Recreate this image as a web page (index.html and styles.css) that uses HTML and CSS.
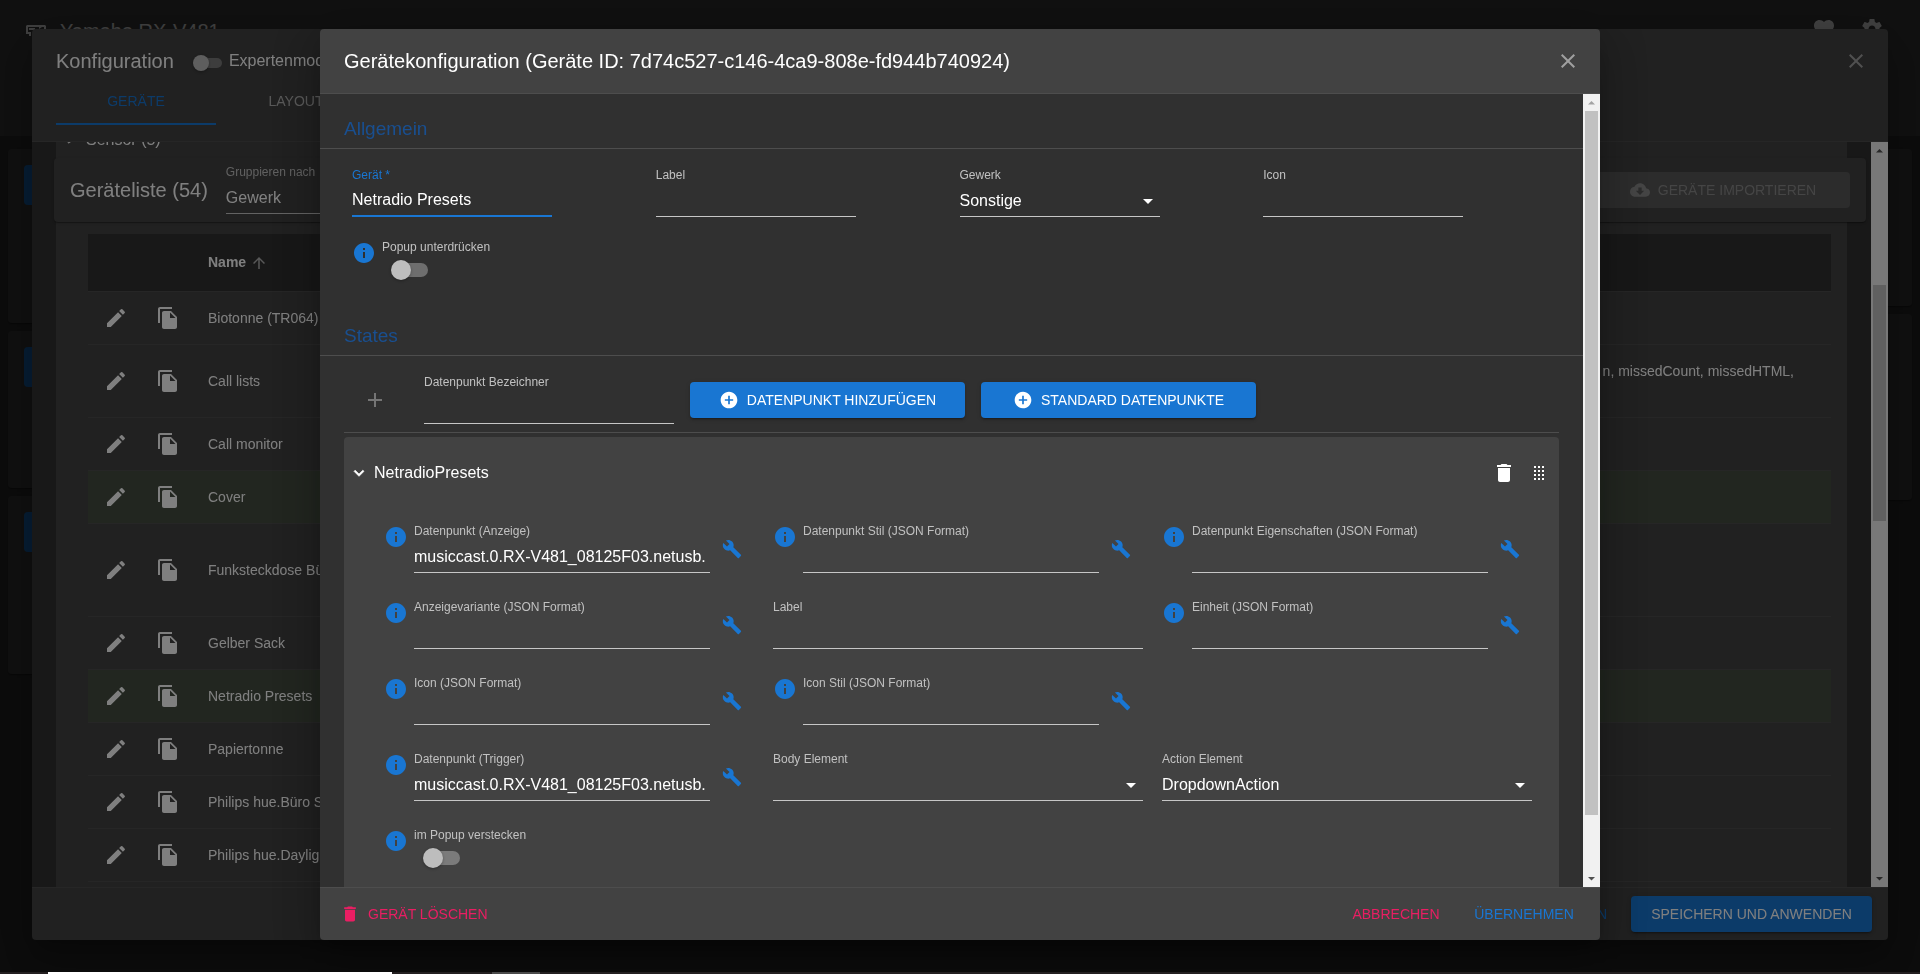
FILE: index.html
```html
<!DOCTYPE html>
<html lang="de">
<head>
<meta charset="utf-8">
<title>Gerätekonfiguration</title>
<link rel="stylesheet" href="styles.css">
</head>
<body>
<svg class="sprite" aria-hidden="true">
  <symbol id="close" viewBox="0 0 24 24"><path d="M19 6.41L17.59 5 12 10.59 6.41 5 5 6.41 10.59 12 5 17.59 6.41 19 12 13.41 17.59 19 19 17.59 13.41 12z"/></symbol>
  <symbol id="edit" viewBox="0 0 24 24"><path d="M3 17.25V21h3.75L17.81 9.94l-3.75-3.75L3 17.25zM20.71 7.04c.39-.39.39-1.02 0-1.41l-2.34-2.34a.9959.9959 0 00-1.41 0l-1.83 1.83 3.75 3.75 1.83-1.83z"/></symbol>
  <symbol id="copy" viewBox="0 0 24 24"><path d="M16 1H4c-1.1 0-2 .9-2 2v14h2V3h12V1zm-1 4l6 6v10c0 1.1-.9 2-2 2H7.99C6.89 23 6 22.1 6 21l.01-14c0-1.1.89-2 1.99-2h7zm-1 7h5.500L14 6.500V12z"/></symbol>
  <symbol id="info" viewBox="0 0 24 24"><path d="M12 2C6.480 2 2 6.480 2 12s4.480 10 10 10 10-4.480 10-10S17.520 2 12 2zm1 15h-2v-6h2v6zm0-8h-2V7h2v2z"/></symbol>
  <symbol id="wrench" viewBox="0 0 24 24"><path d="M22.7 19l-9.1-9.1c.9-2.3.4-5-1.500-6.900-2-2-5-2.400-7.400-1.300L9 6 6 9 1.600 4.700C.4 7.100.9 10.100 2.900 12.100c1.900 1.900 4.600 2.400 6.900 1.500l9.100 9.100c.4.4 1 .4 1.400 0l2.300-2.300c.5-.4.5-1.100.1-1.400z"/></symbol>
  <symbol id="trash" viewBox="0 0 24 24"><path d="M6 19c0 1.100.9 2 2 2h8c1.100 0 2-.9 2-2V7H6v12zM19 4h-3.500l-1-1h-5l-1 1H5v2h14V4z"/></symbol>
  <symbol id="plus" viewBox="0 0 24 24"><path d="M19 13h-6v6h-2v-6H5v-2h6V5h2v6h6v2z"/></symbol>
  <symbol id="addcircle" viewBox="0 0 24 24"><path d="M12 2C6.480 2 2 6.480 2 12s4.480 10 10 10 10-4.480 10-10S17.520 2 12 2zm5 11h-4v4h-2v-4H7v-2h4V7h2v4h4v2z"/></symbol>
  <symbol id="chevron" viewBox="0 0 24 24"><path d="M16.590 8.590L12 13.170 7.410 8.590 6 10l6 6 6-6z" stroke="currentColor" stroke-width=".8"/></symbol>
  <symbol id="caret" viewBox="0 0 24 24"><path d="M7 10l5 5 5-5z"/></symbol>
  <symbol id="arrowup" viewBox="0 0 24 24"><path d="M4 12l1.410 1.410L11 7.830V20h2V7.830l5.580 5.590L20 12l-8-8-8 8z"/></symbol>
  <symbol id="cloud" viewBox="0 0 24 24"><path d="M19.350 10.040C18.670 6.590 15.640 4 12 4 9.110 4 6.600 5.640 5.350 8.040 2.340 8.360 0 10.910 0 14c0 3.310 2.690 6 6 6h13c2.760 0 5-2.240 5-5 0-2.640-2.050-4.780-4.650-4.960zM17 13l-5 5-5-5h3V9h4v4h3z"/></symbol>
  <symbol id="heart" viewBox="0 0 24 24"><path d="M12 21.350l-1.450-1.320C5.400 15.360 2 12.280 2 8.500 2 5.420 4.420 3 7.500 3c1.740 0 3.410.81 4.500 2.090C13.090 3.810 14.760 3 16.500 3 19.580 3 22 5.420 22 8.500c0 3.780-3.400 6.860-8.550 11.540L12 21.350z"/></symbol>
  <symbol id="gear" viewBox="0 0 24 24"><path d="M19.430 12.980c.04-.32.07-.64.07-.98s-.03-.66-.07-.98l2.110-1.650c.19-.15.24-.42.12-.64l-2-3.460c-.12-.22-.39-.3-.61-.22l-2.490 1c-.52-.4-1.080-.73-1.690-.98l-.38-2.650C14.460 2.180 14.250 2 14 2h-4c-.25 0-.46.18-.49.42l-.38 2.650c-.61.25-1.170.59-1.690.98l-2.490-1c-.23-.09-.49 0-.61.22l-2 3.460c-.13.22-.07.49.12.64l2.110 1.650c-.04.32-.07.65-.07.98s.03.66.07.98l-2.110 1.650c-.19.15-.24.42-.12.64l2 3.460c.12.22.39.3.61.22l2.490-1c.52.4 1.080.73 1.690.98l.38 2.650c.03.24.24.42.49.42h4c.25 0 .46-.18.49-.42l.38-2.650c.61-.25 1.170-.59 1.690-.98l2.490 1c.23.09.49 0 .61-.22l2-3.460c.12-.22.07-.49-.12-.64l-2.110-1.650zM12 15.500c-1.930 0-3.500-1.570-3.500-3.500s1.570-3.500 3.500-3.500 3.500 1.570 3.500 3.500-1.570 3.500-3.500 3.500z"/></symbol>
  <symbol id="receiver" viewBox="0 0 24 24"><path d="M3 5h18l1 1v3h-2V7h-2l-3 2V7H4v5h3v4H5v-2H2V6zM5 8h6v2H5z"/></symbol>
  <symbol id="dots" viewBox="0 0 12 14"><path d="M0 0h2v2H0zM4 0h2v2H4zM8 0h2v2H8zM0 4h2v2H0zM4 4h2v2H4zM8 4h2v2H8zM0 8h2v2H0zM4 8h2v2H4zM8 8h2v2H8zM0 12h2v2H0zM4 12h2v2H4zM8 12h2v2H8z"/></symbol>
  <symbol id="scrollup" viewBox="0 0 17 17"><path d="M5 10.500h7L8.500 7z"/></symbol>
  <symbol id="scrolldown" viewBox="0 0 17 17"><path d="M5 7h7l-3.500 3.500z"/></symbol>
</svg>

<main class="app">
  <header class="app-bar">
    <svg class="icon"><use href="#receiver"/></svg>
    <h1 class="app-title">Yamaha RX-V481</h1>
    <button class="icon-btn" aria-label="Favoriten"><svg class="icon"><use href="#heart"/></svg></button>
    <button class="icon-btn" aria-label="Einstellungen"><svg class="icon"><use href="#gear"/></svg></button>
  </header>
  <div class="tiles">
    <div class="tile-col">
      <section class="tile tile-l"><span class="tile-badge"></span></section>
      <section class="tile tile-m"><span class="tile-badge"></span></section>
      <section class="tile tile-xl"><span class="tile-badge"></span></section>
    </div>
    <div class="tile-col">
      <section class="tile tile-m"></section>
      <section class="tile tile-xxl"></section>
    </div>
  </div>
</main>

<div class="overlay overlay-wide">
  <section class="dialog" role="dialog" aria-label="Konfiguration">
    <header class="dialog-head head-tabs">
      <div class="title-row">
        <h2 class="title">Konfiguration</h2>
        <label class="expert"><input type="checkbox" class="switch switch-small" role="switch">Expertenmodus</label>
        <button class="icon-btn close" aria-label="Schließen"><svg class="icon"><use href="#close"/></svg></button>
      </div>
      <nav class="tabs">
        <button class="tab tab-active">GERÄTE</button>
        <button class="tab">LAYOUT</button>
      </nav>
    </header>
    <div class="dialog-body">
      <div class="scroll-area list-area">
        <div class="list-panel">
          <div class="group-row"><svg class="icon icon-20"><use href="#chevron"/></svg>Sensor (5)</div>
          <div class="list-bar">
            <h3 class="title">Geräteliste (54)</h3>
            <div class="field field-group">
              <label for="group">Gruppieren nach</label>
              <select id="group"><option>Gewerk</option></select>
              <svg class="icon caret"><use href="#caret"/></svg>
            </div>
            <button class="btn btn-disabled" disabled><svg class="icon icon-20"><use href="#cloud"/></svg>GERÄTE IMPORTIEREN</button>
          </div>
          <table class="devices">
            <colgroup><col class="col-icon"><col class="col-icon"><col class="col-name"><col></colgroup>
            <thead><tr><th></th><th></th><th>Name <svg class="icon sort"><use href="#arrowup"/></svg></th><th></th></tr></thead>
            <tbody>
              <tr><td><svg class="icon"><use href="#edit"/></svg></td><td><svg class="icon"><use href="#copy"/></svg></td><td>Biotonne (TR064)</td><td></td></tr>
              <tr class="lines-2"><td><svg class="icon"><use href="#edit"/></svg></td><td><svg class="icon"><use href="#copy"/></svg></td><td>Call lists</td><td class="states">n, missedCount, missedHTML,</td></tr>
              <tr><td><svg class="icon"><use href="#edit"/></svg></td><td><svg class="icon"><use href="#copy"/></svg></td><td>Call monitor</td><td></td></tr>
              <tr class="marked"><td><svg class="icon"><use href="#edit"/></svg></td><td><svg class="icon"><use href="#copy"/></svg></td><td>Cover</td><td></td></tr>
              <tr class="lines-3"><td><svg class="icon"><use href="#edit"/></svg></td><td><svg class="icon"><use href="#copy"/></svg></td><td>Funksteckdose Büro</td><td></td></tr>
              <tr><td><svg class="icon"><use href="#edit"/></svg></td><td><svg class="icon"><use href="#copy"/></svg></td><td>Gelber Sack</td><td></td></tr>
              <tr class="marked"><td><svg class="icon"><use href="#edit"/></svg></td><td><svg class="icon"><use href="#copy"/></svg></td><td>Netradio Presets</td><td></td></tr>
              <tr><td><svg class="icon"><use href="#edit"/></svg></td><td><svg class="icon"><use href="#copy"/></svg></td><td>Papiertonne</td><td></td></tr>
              <tr><td><svg class="icon"><use href="#edit"/></svg></td><td><svg class="icon"><use href="#copy"/></svg></td><td>Philips hue.Büro S</td><td></td></tr>
              <tr><td><svg class="icon"><use href="#edit"/></svg></td><td><svg class="icon"><use href="#copy"/></svg></td><td>Philips hue.Daylight</td><td></td></tr>
            </tbody>
          </table>
        </div>
      </div>
      <div class="scrollbar">
        <svg class="arrow"><use href="#scrollup"/></svg>
        <div class="track track-list"><div class="thumb"></div></div>
        <svg class="arrow"><use href="#scrolldown"/></svg>
      </div>
    </div>
    <footer class="dialog-foot">
      <span class="spacer"></span>
      <button class="btn btn-text btn-primary">SPEICHERN</button>
      <button class="btn btn-fill btn-save">SPEICHERN UND ANWENDEN</button>
    </footer>
  </section>
</div>

<div class="overlay overlay-narrow">
  <section class="dialog dialog-device" role="dialog" aria-label="Gerätekonfiguration">
    <header class="dialog-head">
      <div class="title-row">
        <h2 class="title">Gerätekonfiguration (Geräte ID: 7d74c527-c146-4ca9-808e-fd944b740924)</h2>
        <button class="icon-btn close" aria-label="Schließen"><svg class="icon"><use href="#close"/></svg></button>
      </div>
    </header>
    <div class="dialog-body">
      <div class="scroll-area">
        <h3 class="section">Allgemein</h3>
        <div class="general">
          <div class="field focused"><label for="device">Gerät *</label><input id="device" type="text" value="Netradio Presets"></div>
          <div class="field"><label for="glabel">Label</label><input id="glabel" type="text"></div>
          <div class="field"><label for="trade">Gewerk</label><select id="trade"><option>Sonstige</option></select><svg class="icon caret"><use href="#caret"/></svg></div>
          <div class="field"><label for="gicon">Icon</label><input id="gicon" type="text"></div>
          <div class="cell">
            <svg class="icon info"><use href="#info"/></svg>
            <div class="toggle"><label for="suppress">Popup unterdrücken</label><input id="suppress" type="checkbox" class="switch" role="switch"></div>
          </div>
        </div>
        <h3 class="section">States</h3>
        <div class="states-area">
          <div class="add-row">
            <button class="icon-btn add" aria-label="Hinzufügen" disabled><svg class="icon"><use href="#plus"/></svg></button>
            <div class="field field-name"><label for="dpname">Datenpunkt Bezeichner</label><input id="dpname" type="text"></div>
            <button class="btn btn-fill btn-add"><svg class="icon icon-20"><use href="#addcircle"/></svg>DATENPUNKT HINZUFÜGEN</button>
            <button class="btn btn-fill btn-add"><svg class="icon icon-20"><use href="#addcircle"/></svg>STANDARD DATENPUNKTE</button>
          </div>
          <article class="state-card">
            <header class="card-head">
              <svg class="icon icon-20"><use href="#chevron"/></svg>
              <span class="card-title">NetradioPresets</span>
              <button class="icon-btn" aria-label="Löschen"><svg class="icon"><use href="#trash"/></svg></button>
              <svg class="dots"><use href="#dots"/></svg>
            </header>
            <div class="card-grid">
              <div class="cell"><svg class="icon info"><use href="#info"/></svg><div class="field"><label for="f1">Datenpunkt (Anzeige)</label><input id="f1" type="text" value="musiccast.0.RX-V481_08125F03.netusb."></div><button class="icon-btn tool" aria-label="Bearbeiten"><svg class="icon icon-20"><use href="#wrench"/></svg></button></div>
              <div class="cell"><svg class="icon info"><use href="#info"/></svg><div class="field"><label for="f2">Datenpunkt Stil (JSON Format)</label><input id="f2" type="text"></div><button class="icon-btn tool" aria-label="Bearbeiten"><svg class="icon icon-20"><use href="#wrench"/></svg></button></div>
              <div class="cell"><svg class="icon info"><use href="#info"/></svg><div class="field"><label for="f3">Datenpunkt Eigenschaften (JSON Format)</label><input id="f3" type="text"></div><button class="icon-btn tool" aria-label="Bearbeiten"><svg class="icon icon-20"><use href="#wrench"/></svg></button></div>
              <div class="cell"><svg class="icon info"><use href="#info"/></svg><div class="field"><label for="f4">Anzeigevariante (JSON Format)</label><input id="f4" type="text"></div><button class="icon-btn tool" aria-label="Bearbeiten"><svg class="icon icon-20"><use href="#wrench"/></svg></button></div>
              <div class="cell"><div class="field"><label for="f5">Label</label><input id="f5" type="text"></div></div>
              <div class="cell"><svg class="icon info"><use href="#info"/></svg><div class="field"><label for="f6">Einheit (JSON Format)</label><input id="f6" type="text"></div><button class="icon-btn tool" aria-label="Bearbeiten"><svg class="icon icon-20"><use href="#wrench"/></svg></button></div>
              <div class="cell"><svg class="icon info"><use href="#info"/></svg><div class="field"><label for="f7">Icon (JSON Format)</label><input id="f7" type="text"></div><button class="icon-btn tool" aria-label="Bearbeiten"><svg class="icon icon-20"><use href="#wrench"/></svg></button></div>
              <div class="cell"><svg class="icon info"><use href="#info"/></svg><div class="field"><label for="f8">Icon Stil (JSON Format)</label><input id="f8" type="text"></div><button class="icon-btn tool" aria-label="Bearbeiten"><svg class="icon icon-20"><use href="#wrench"/></svg></button></div>
              <div class="cell cell-first"><svg class="icon info"><use href="#info"/></svg><div class="field"><label for="f9">Datenpunkt (Trigger)</label><input id="f9" type="text" value="musiccast.0.RX-V481_08125F03.netusb."></div><button class="icon-btn tool" aria-label="Bearbeiten"><svg class="icon icon-20"><use href="#wrench"/></svg></button></div>
              <div class="cell"><div class="field"><label for="f10">Body Element</label><select id="f10"><option></option></select><svg class="icon caret"><use href="#caret"/></svg></div></div>
              <div class="cell"><div class="field"><label for="f11">Action Element</label><select id="f11"><option>DropdownAction</option></select><svg class="icon caret"><use href="#caret"/></svg></div></div>
              <div class="cell"><svg class="icon info"><use href="#info"/></svg><div class="toggle"><label for="hide">im Popup verstecken</label><input id="hide" type="checkbox" class="switch" role="switch"></div></div>
            </div>
          </article>
        </div>
      </div>
      <div class="scrollbar">
        <svg class="arrow arrow-off"><use href="#scrollup"/></svg>
        <div class="track track-device"><div class="thumb"></div></div>
        <svg class="arrow"><use href="#scrolldown"/></svg>
      </div>
    </div>
    <footer class="dialog-foot">
      <button class="btn btn-danger btn-delete"><svg class="icon icon-20"><use href="#trash"/></svg>GERÄT LÖSCHEN</button>
      <span class="spacer"></span>
      <button class="btn btn-danger btn-wide">ABBRECHEN</button>
      <button class="btn btn-primary btn-wide">ÜBERNEHMEN</button>
    </footer>
  </section>
</div>

<div class="taskbar"><span class="task task-active"></span><span class="task"></span></div>
</body>
</html>
```
FILE: styles.css
```css
* { box-sizing: border-box; }

body {
  margin: 0;
  height: 100vh;
  overflow: hidden;
  background: #303030;
  color: #fff;
  font-family: "Liberation Sans", Arial, sans-serif;
  font-size: 16px;
}

h1, h2, h3 { margin: 0; font-weight: 400; }
button, input, select { font: inherit; color: inherit; }
button { border: 0; background: none; padding: 0; }

.sprite { display: none; }
.icon { display: block; flex: none; width: 24px; height: 24px; fill: currentColor; }
.icon-20 { width: 20px; height: 20px; }
.icon-btn { display: flex; flex: none; }
.spacer { flex: 1; }

/* App behind the dialogs */
.app { height: 100%; }
.app-bar {
  display: flex;
  align-items: flex-start;
  height: 136px;
  padding: 20px 36px 0 24px;
  background: #424242;
}
.app-title { flex: 1; padding-left: 12px; font-size: 20px; line-height: 22px; }
.app-bar .icon-btn { padding-left: 24px; margin-top: -3px; }
.tiles { display: flex; justify-content: space-between; padding: 13px 8px; }
.tile-col { display: flex; flex-direction: column; gap: 8px; width: 30%; }
.tile {
  padding: 16px;
  border-radius: 4px;
  background: #424242;
  box-shadow: 0 2px 1px -1px rgba(0, 0, 0, .2), 0 1px 1px rgba(0, 0, 0, .14), 0 1px 3px rgba(0, 0, 0, .12);
}
.tile-badge { display: block; width: 40px; height: 40px; border-radius: 4px; background: #1976d2; }
.tile-m { height: 157px; }
.tile-l { height: 174px; }
.tile-xl { height: 178px; }
.tile-xxl { height: 186px; }

/* Dialogs */
.overlay {
  position: fixed;
  inset: 0;
  display: flex;
  justify-content: center;
  padding: 29px 32px 34px;
  background: rgba(0, 0, 0, .5);
}
.dialog {
  display: flex;
  flex-direction: column;
  flex: 1;
  min-width: 0;
  overflow: hidden;
  border-radius: 4px;
  background: #424242;
  box-shadow: 0 11px 15px -7px rgba(0, 0, 0, .2), 0 24px 38px 3px rgba(0, 0, 0, .14), 0 9px 46px 8px rgba(0, 0, 0, .12);
}
.dialog-device { max-width: 1280px; }
.dialog-head { padding: 16px 20px 16px 24px; border-bottom: 1px solid #4d4d4d; }
.title-row { display: flex; align-items: center; height: 32px; }
.title { font-size: 20px; line-height: 32px; white-space: nowrap; }
.close { margin-left: auto; color: #a0a0a0; }
.expert { display: flex; align-items: center; gap: 7px; margin-left: 15px; }
.tabs { display: flex; }
.tab { width: 160px; height: 48px; padding-top: 2px; font-size: 14px; color: #b3b3b3; border-bottom: 2px solid transparent; }
.tab-active { color: #1976d2; border-color: #1976d2; }
.dialog-body { display: flex; flex: 1; min-height: 0; background: #303030; }
.scroll-area { flex: 1; min-width: 0; overflow: hidden; }
.dialog-foot {
  display: flex;
  flex: none;
  align-items: center;
  gap: 8px;
  padding: 8px 16px;
  border-top: 1px solid #4d4d4d;
}

/* Scrollbars */
.scrollbar { display: flex; flex-direction: column; flex: none; width: 17px; background: #f1f1f1; color: #505050; }
.arrow { display: block; width: 17px; height: 17px; fill: currentColor; }
.arrow-off { color: #a3a3a3; }
.track { display: flex; flex-direction: column; flex: 1; padding: 0 2px; }
.thumb { background: #c1c1c1; }
.track-list .thumb { margin-top: 126px; height: 236px; }
.track-device .thumb { height: 704px; }

/* Buttons */
.btn {
  display: flex;
  flex: none;
  align-items: center;
  justify-content: center;
  gap: 8px;
  height: 36px;
  border-radius: 4px;
  font-size: 14px;
  white-space: nowrap;
}
.btn-fill {
  background: #1976d2;
  box-shadow: 0 3px 1px -2px rgba(0, 0, 0, .2), 0 2px 2px rgba(0, 0, 0, .14), 0 1px 5px rgba(0, 0, 0, .12);
}
.btn-save { width: 241px; }
.btn-add { width: 275px; }
.btn-text { padding: 0 16px; }
.btn-wide { width: 120px; }
.btn-primary { color: #1976d2; }
.btn-danger { color: #e91e63; }
.btn-disabled { width: 254px; margin-left: auto; background: #585858; color: #8a8a8a; }
.btn-delete { padding: 0 4px; }

/* Text fields */
.field { position: relative; display: flex; flex-direction: column; min-width: 0; height: 48px; }
.field label, .toggle label { font-size: 12px; line-height: 12px; color: #c1c1c1; white-space: nowrap; }
.field input, .field select {
  width: 100%;
  height: 32px;
  margin: 4px 0 0;
  padding: 0;
  border: 0;
  border-bottom: 1px solid #c6c6c6;
  border-radius: 0;
  outline: 0;
  background: transparent;
  appearance: none;
}
.caret { position: absolute; right: 0; bottom: 4px; pointer-events: none; }
.field.focused label { color: #1976d2; }
.field.focused input { border-bottom: 2px solid #1976d2; }

/* Switches */
.toggle { display: flex; flex-direction: column; }
.switch {
  position: relative;
  flex: none;
  width: 34px;
  height: 14px;
  margin: 10px 12px;
  border-radius: 7px;
  background: rgba(255, 255, 255, .3);
  appearance: none;
}
.switch::before {
  content: "";
  position: absolute;
  left: -3px;
  top: -3px;
  width: 20px;
  height: 20px;
  border-radius: 50%;
  background: #bdbdbd;
  box-shadow: 0 1px 3px rgba(0, 0, 0, .3);
}
.switch-small { width: 26px; height: 10px; margin: 3px 0 0 7px; }
.switch-small::before { width: 16px; height: 16px; }

/* Device list */
.list-area { padding: 0 24px; }
.list-panel { display: flow-root; height: 100%; background: #424242; }
.group-row { display: flex; align-items: center; gap: 7px; height: 24px; margin-top: -14px; padding-left: 3px; }
.list-bar {
  position: relative;
  display: flex;
  align-items: center;
  height: 64px;
  margin: 6px -19px 12px -2px;
  padding: 0 16px;
  border-radius: 4px;
  background: #424242;
  box-shadow: 0 2px 1px -1px rgba(0, 0, 0, .2), 0 1px 1px rgba(0, 0, 0, .14), 0 1px 3px rgba(0, 0, 0, .12);
}
.field-group { width: 200px; margin-left: 18px; }
.devices { width: calc(100% - 48px); margin: 0 16px 0 32px; border-collapse: collapse; table-layout: fixed; font-size: 14px; line-height: 20px; }
.col-icon { width: 52px; }
.col-name { width: 400px; }
.devices th { height: 57px; padding: 0 16px; background: #303030; border-bottom: 1px solid #4d4d4d; text-align: left; }
.devices td { height: 53px; padding: 0 16px; border-bottom: 1px solid #4d4d4d; }
.devices .lines-2 td { height: 73px; }
.devices .lines-3 td { height: 93px; }
.marked { background: #444d40; }
.sort { display: inline-block; width: 18px; height: 18px; vertical-align: middle; fill: #b0b0b0; }
.devices .states { padding: 16px 37px 36px 0; text-align: right; }

/* Device form */
.section { height: 55px; padding: 20px 24px 0; border-bottom: 1px solid #4d4d4d; font-size: 19px; line-height: 29px; color: #194f90; }
.general { display: grid; grid-template-columns: repeat(4, 1fr); align-content: start; row-gap: 24px; padding: 20px 24px 0; height: 152px; }
.general .field { width: 200px; margin-left: 8px; }
.general .cell { padding-left: 8px; }
.states-area { padding: 20px 24px 0; }
.add-row { display: flex; align-items: center; gap: 16px; padding-bottom: 8px; border-bottom: 1px solid #4d4d4d; }
.add { padding: 0 21px 0 19px; color: #757575; }
.field-name { width: 250px; }
.state-card { margin-top: 4px; height: 520px; border-radius: 4px; background: #424242; }
.card-head { display: flex; align-items: center; height: 72px; padding: 0 13px 0 5px; }
.card-title { flex: 1; padding-left: 5px; }
.dots { flex: none; width: 12px; height: 14px; margin-left: 18px; fill: #fff; }
.card-grid { display: grid; grid-template-columns: repeat(3, 1fr); column-gap: 19px; row-gap: 28px; padding: 16px 27px 0 40px; }
.cell { display: flex; align-items: flex-start; min-width: 0; }
.cell .field { flex: 1; }
.cell-first { grid-column: 1; }
.info { margin-right: 6px; color: #1976d2; }
.tool { padding: 14px 12px 0; color: #1976d2; }

/* Desktop taskbar edge */
.taskbar { position: fixed; left: 0; right: 0; bottom: 0; display: flex; gap: 100px; height: 2px; padding-left: 48px; background: #231f20; }
.task { width: 48px; background: #4a4a4a; }
.task-active { width: 344px; background: #fff; }
```
